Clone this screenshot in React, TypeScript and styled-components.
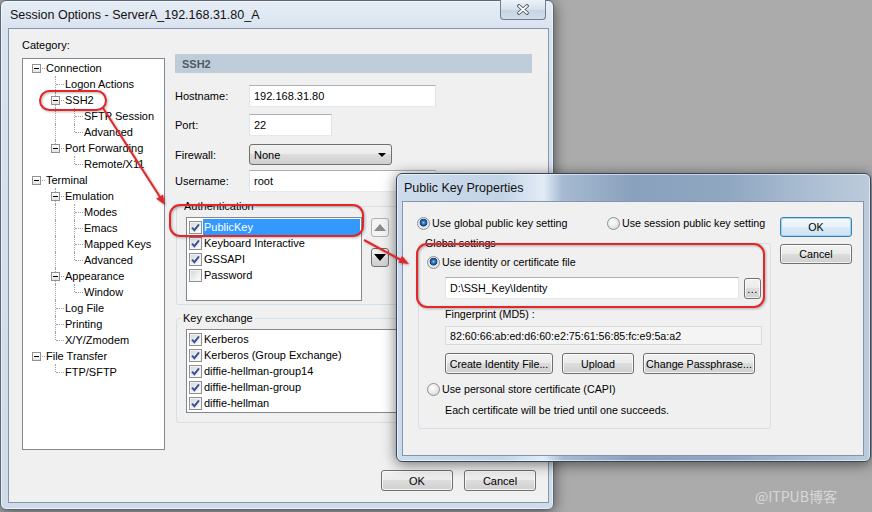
import React from 'react';
import styled, { createGlobalStyle } from 'styled-components';

const GlobalStyle = createGlobalStyle`
  html, body {
    margin: 0;
    padding: 0;
  }
  body {
    background: #ababab;
    font-family: "Liberation Sans", Arial, sans-serif;
    font-size: 11px;
    color: #000;
  }
`;

type TreeNode = { label: string; children?: TreeNode[] };

type FlatRow = {
  label: string
  depth: number
  expandable: boolean
  last: boolean
  guides: boolean[]
};

const categories: TreeNode[] = [
  {
    label: 'Connection',
    children: [
      { label: 'Logon Actions' },
      { label: 'SSH2', children: [{ label: 'SFTP Session' }, { label: 'Advanced' }] },
      { label: 'Port Forwarding', children: [{ label: 'Remote/X11' }] },
    ],
  },
  {
    label: 'Terminal',
    children: [
      {
        label: 'Emulation',
        children: [{ label: 'Modes' }, { label: 'Emacs' }, { label: 'Mapped Keys' }, { label: 'Advanced' }],
      },
      { label: 'Appearance', children: [{ label: 'Window' }] },
      { label: 'Log File' },
      { label: 'Printing' },
      { label: 'X/Y/Zmodem' },
    ],
  },
  { label: 'File Transfer', children: [{ label: 'FTP/SFTP' }] },
];

const flatten = (nodes: TreeNode[], depth = 0, guides: boolean[] = []): FlatRow[] =>
  nodes.flatMap((node, i) => {
    const last = i === nodes.length - 1;
    const row: FlatRow = { label: node.label, depth, expandable: !!node.children, last, guides };
    const kids = node.children ? flatten(node.children, depth + 1, [...guides, !last]) : [];
    return [row, ...kids];
  });

const authMethods = [
  { label: 'PublicKey', checked: true, selected: true },
  { label: 'Keyboard Interactive', checked: true },
  { label: 'GSSAPI', checked: true },
  { label: 'Password', checked: false },
];

const keyExchanges = [
  'Kerberos',
  'Kerberos (Group Exchange)',
  'diffie-hellman-group14',
  'diffie-hellman-group',
  'diffie-hellman',
];

const buttonFace = 'linear-gradient(#f2f2f2 0%, #ebebeb 49%, #dddddd 50%, #cfcfcf 100%)';

/* ---------- desktop & windows ---------- */

const Desktop = styled.div`
  position: relative;
  width: 872px;
  height: 512px;
  overflow: hidden;
  background: #ababab;
`;

const Window = styled.div<{ $left: number; $top: number; $width: number; $height: number; $active?: boolean; $pad: string }>`
  position: absolute;
  left: ${({ $left }) => $left}px;
  top: ${({ $top }) => $top}px;
  width: ${({ $width }) => $width}px;
  height: ${({ $height }) => $height}px;
  box-sizing: border-box;
  display: flex;
  flex-direction: column;
  padding: ${({ $pad }) => $pad};
  border: 1px solid ${({ $active }) => ($active ? '#34475e' : '#5a6777')};
  border-radius: 6px;
  background: ${({ $active }) =>
    $active
      ? 'linear-gradient(90deg, #cddcec 0%, #c3d4e7 22%, #e2ecf6 31%, #a6bad2 35%, #8aa1bd 50%, #90a7c2 70%, #afc1d5 90%, #bccbdb 100%)'
      : 'linear-gradient(180deg, #e6edf6 0px, #d9e3ef 28px, #cfdbe9 100%)'};
  box-shadow: 0 2px 14px rgba(0, 0, 0, 0.55), inset 0 0 0 1px rgba(255, 255, 255, 0.55);
`;

const TitleBar = styled.div<{ $indent: number }>`
  display: flex;
  align-items: center;
  height: 27px;
  margin-left: ${({ $indent }) => $indent}px;
  white-space: nowrap;
`;

const TitleText = styled.span`
  font-size: 12.5px;
  color: #111;
`;

const CloseButton = styled.div`
  margin-left: auto;
  align-self: flex-start;
  margin-top: -1px;
  margin-right: 3px;
  width: 46px;
  height: 20px;
  box-sizing: border-box;
  border: 1px solid #6d7e94;
  border-top: none;
  border-radius: 0 0 4px 4px;
  background: linear-gradient(#edf2f8, #d6e0ec 50%, #c6d3e2 51%, #d2dde9);
  display: flex;
  align-items: center;
  justify-content: center;
`;

const Client = styled.div`
  flex: 1;
  display: flex;
  flex-direction: column;
  box-sizing: border-box;
  border: 1px solid #8496ae;
  background: #f0f0f0;
`;

/* ---------- main window ---------- */

const MainClient = styled(Client)`
  padding: 9px 12px 0 13px;
`;

const MainBody = styled.div`
  display: flex;
  gap: 10px;
`;

const CategoryColumn = styled.div`
  display: flex;
  flex-direction: column;
  width: 143px;
`;

const CategoryLabel = styled.div`
  line-height: 14px;
  margin-bottom: 6px;
`;

const Tree = styled.div`
  height: 392px;
  box-sizing: border-box;
  border: 1px solid #828790;
  background: #fff;
  padding: 1px 0 0 4px;
`;

const TreeRow = styled.div`
  display: flex;
  height: 16px;
  white-space: nowrap;
`;

const Guide = styled.span<{ $line: boolean }>`
  position: relative;
  width: 19px;
  flex-shrink: 0;

  &::before {
    content: '';
    display: ${({ $line }) => ($line ? 'block' : 'none')};
    position: absolute;
    left: 9px;
    top: 0;
    height: 16px;
    border-left: 1px dotted #a0a0a0;
  }
`;

const Joint = styled.span<{ $line: 'none' | 'half' | 'full' }>`
  position: relative;
  width: 19px;
  flex-shrink: 0;

  &::before {
    content: '';
    display: ${({ $line }) => ($line === 'none' ? 'none' : 'block')};
    position: absolute;
    left: 9px;
    top: 0;
    height: ${({ $line }) => ($line === 'full' ? 16 : 8)}px;
    border-left: 1px dotted #a0a0a0;
  }

  &::after {
    content: '';
    position: absolute;
    left: 10px;
    top: 8px;
    width: 8px;
    border-top: 1px dotted #a0a0a0;
  }
`;

const Expander = styled.span`
  position: absolute;
  left: 5px;
  top: 4px;
  z-index: 1;
  width: 9px;
  height: 9px;
  box-sizing: border-box;
  border: 1px solid #919191;
  background: linear-gradient(#ffffff, #e4e4e4);

  &::before {
    content: '';
    position: absolute;
    left: 1px;
    top: 3px;
    width: 5px;
    height: 1px;
    background: #000;
  }
`;

const TreeLabel = styled.span`
  line-height: 16px;
`;

const Panel = styled.div`
  display: flex;
  flex-direction: column;
  width: 357px;
  margin-top: 16px;
`;

const SectionHeader = styled.div`
  height: 19px;
  display: flex;
  align-items: center;
  padding-left: 7px;
  background: #bfcddb;
  color: #4e5a66;
  font-weight: bold;
`;

const FormRow = styled.div<{ $gap: number }>`
  display: flex;
  align-items: center;
  margin-top: ${({ $gap }) => $gap}px;
`;

const FieldLabel = styled.span`
  width: 74px;
  flex-shrink: 0;
`;

const TextField = styled.input<{ $width: number; $height?: number }>`
  width: ${({ $width }) => $width}px;
  height: ${({ $height }) => $height ?? 22}px;
  box-sizing: border-box;
  margin: 0;
  padding: 0 4px;
  border: 1px solid #e2e3ea;
  border-top-color: #abadb3;
  border-bottom-color: #e3e9ef;
  background: #fff;
  font: inherit;
  color: #000;
  outline: none;
`;

const Combo = styled.div<{ $width: number }>`
  width: ${({ $width }) => $width}px;
  height: 21px;
  box-sizing: border-box;
  display: flex;
  align-items: center;
  padding: 0 5px 0 4px;
  border: 1px solid #707070;
  border-radius: 3px;
  background: ${buttonFace};
`;

const ComboArrow = styled.span`
  margin-left: auto;
  width: 0;
  height: 0;
  border-left: 4px solid transparent;
  border-right: 4px solid transparent;
  border-top: 4px solid #000;
`;

const Group = styled.fieldset<{ $gap: number; $width?: number; $indent?: number }>`
  margin: ${({ $gap }) => $gap}px 0 0 ${({ $indent }) => $indent ?? 1}px;
  width: ${({ $width }) => ($width ? `${$width}px` : 'auto')};
  box-sizing: border-box;
  min-width: 0;
  padding: 0;
  border: 1px solid #d5dfe5;
  border-radius: 3px;
`;

const GroupLegend = styled.legend<{ $offset: number }>`
  margin-left: ${({ $offset }) => $offset}px;
  padding: 0 2px;
  line-height: 14px;
`;

const GroupBody = styled.div<{ $pad: string }>`
  padding: ${({ $pad }) => $pad};
  display: flex;
`;

const ListBox = styled.div<{ $width: number }>`
  width: ${({ $width }) => $width}px;
  height: 84px;
  box-sizing: border-box;
  flex-shrink: 0;
  padding: 1px 1px 1px 2px;
  border: 1px solid #828790;
  background: #fff;
`;

const ListItem = styled.div`
  display: flex;
  align-items: center;
  height: 16px;
  white-space: nowrap;
`;

const ItemText = styled.span<{ $selected?: boolean }>`
  margin-left: 1px;
  padding: 0 1px;
  line-height: 16px;
  flex: ${({ $selected }) => ($selected ? 1 : 'none')};
  background: ${({ $selected }) => ($selected ? '#3399ff' : 'transparent')};
  color: ${({ $selected }) => ($selected ? '#fff' : '#000')};
`;

const CheckFrame = styled.span`
  width: 13px;
  height: 13px;
  box-sizing: border-box;
  flex-shrink: 0;
  display: flex;
  align-items: center;
  justify-content: center;
  border: 1px solid #8e8f8f;
  background: linear-gradient(135deg, #cfd3d8 0%, #eceef0 55%, #ffffff 100%);
  box-shadow: inset 0 0 0 1px #f4f4f4;
`;

const OrderButtons = styled.div`
  display: flex;
  flex-direction: column;
  gap: 11px;
  margin: 1px 0 0 9px;
`;

const ArrowButton = styled.div<{ $up?: boolean; $disabled?: boolean }>`
  width: 18px;
  height: 19px;
  box-sizing: border-box;
  display: flex;
  align-items: center;
  justify-content: center;
  border: 1px solid ${({ $disabled }) => ($disabled ? '#adb2b5' : '#707070')};
  border-radius: 3px;
  background: ${({ $disabled }) => ($disabled ? '#f4f4f4' : buttonFace)};

  &::before {
    content: '';
    width: 0;
    height: 0;
    border-left: 6px solid transparent;
    border-right: 6px solid transparent;
    ${({ $up, $disabled }) =>
      $up
        ? `border-bottom: 7px solid ${$disabled ? '#8a8a8a' : '#000'};`
        : `border-top: 7px solid ${$disabled ? '#8a8a8a' : '#000'};`}
  }
`;

const Footer = styled.div`
  display: flex;
  justify-content: flex-end;
  gap: 11px;
  margin-top: 20px;
`;

const PushButton = styled.button<{ $width: number; $height?: number; $default?: boolean }>`
  width: ${({ $width }) => $width}px;
  height: ${({ $height }) => $height ?? 21}px;
  box-sizing: border-box;
  flex-shrink: 0;
  margin: 0;
  padding: 0;
  font: inherit;
  color: #000;
  white-space: nowrap;
  border: 1px solid ${({ $default }) => ($default ? '#3c7fb1' : '#707070')};
  border-radius: 3px;
  background: ${({ $default }) =>
    $default ? 'linear-gradient(#f4f9fd 0%, #e9f3fa 49%, #d9eaf6 50%, #cfe3f2 100%)' : buttonFace};
  box-shadow: inset 0 0 0 1px ${({ $default }) => ($default ? '#9fd5f4' : 'rgba(255, 255, 255, 0.75)')};
`;

/* ---------- dialog ---------- */

const DialogClient = styled(Client)`
  flex-direction: row;
  gap: 9px;
  padding: 14px 12px 0 14px;
  font-size: 10.7px;
`;

const DialogMain = styled.div`
  display: flex;
  flex-direction: column;
  width: 354px;
`;

const RadioLine = styled.div`
  display: grid;
  grid-template-columns: 190px auto;
  height: 14px;
`;

const RadioLabel = styled.label`
  display: flex;
  align-items: center;
  gap: 2px;
  height: 14px;
  white-space: nowrap;
`;

const RadioDot = styled.span<{ $checked?: boolean }>`
  width: 13px;
  height: 13px;
  box-sizing: border-box;
  flex-shrink: 0;
  border-radius: 50%;
  border: 1px solid #8e8f8f;
  background: ${({ $checked }) =>
    $checked
      ? 'radial-gradient(circle at 50% 42%, #9ad0f5 0, #2f7fcc 1.5px, #0d3d74 3.6px, #e9e9e9 4.2px, #dadada 100%)'
      : 'radial-gradient(circle at 40% 35%, #ffffff 0, #e8e8e8 55%, #cdcdcd 100%)'};
`;

const GroupColumn = styled.div`
  display: flex;
  flex-direction: column;
`;

const Indented = styled.div<{ $gap: number }>`
  display: flex;
  gap: 9px;
  margin: ${({ $gap }) => $gap}px 0 0 18px;
  white-space: nowrap;
`;

const HintText = styled.div<{ $gap: number }>`
  margin: ${({ $gap }) => $gap}px 0 0 18px;
  line-height: 14px;
  white-space: nowrap;
`;

const BrowseButton = styled(PushButton)`
  margin-left: -4px;
  margin-top: 1px;
  letter-spacing: 0.5px;
`;

const FingerprintField = styled.div`
  width: 317px;
  height: 19px;
  box-sizing: border-box;
  display: flex;
  align-items: center;
  padding-left: 4px;
  border: 1px solid #d9d9d9;
  background: #f4f4f4;
  white-space: nowrap;
`;

const DialogButtons = styled.div`
  display: flex;
  flex-direction: column;
  gap: 7px;
  margin-top: 1px;
`;

/* ---------- overlays ---------- */

const Annotations = styled.svg`
  position: absolute;
  left: 0;
  top: 0;
  width: 872px;
  height: 512px;
  pointer-events: none;
  filter: drop-shadow(1px 1px 1px rgba(0, 0, 0, 0.3));
`;

const Watermark = styled.div`
  position: absolute;
  left: 755px;
  top: 486px;
  font-family: "Noto Sans CJK SC", "Liberation Sans", sans-serif;
  font-size: 14px;
  color: rgba(255, 255, 255, 0.55);
  white-space: nowrap;
`;

const CheckBox = ({ checked }: { checked: boolean }) => (
  <CheckFrame>
    {checked && (
      <svg width="9" height="9" viewBox="0 0 9 9">
        <path d="M1 4.6 L3.4 7.2 L8 1.4" stroke="#3b4f90" strokeWidth="1.9" fill="none" />
      </svg>
    )}
  </CheckFrame>
);

const RadioOption = ({ label, checked }: { label: string; checked?: boolean }) => (
  <RadioLabel>
    <RadioDot $checked={checked} />
    {label}
  </RadioLabel>
);

const CategoryTree = () => (
  <Tree>
    {flatten(categories).map((row, i) => (
      <TreeRow key={i}>
        {row.guides.map((g, d) => (
          <Guide key={d} $line={d > 0 && g} />
        ))}
        <Joint $line={row.depth === 0 ? 'none' : row.last ? 'half' : 'full'}>
          {row.expandable && <Expander />}
        </Joint>
        <TreeLabel>{row.label}</TreeLabel>
      </TreeRow>
    ))}
  </Tree>
);

export default function App() {
  return (
    <>
      <GlobalStyle />
      <Desktop>
        <Window $left={0} $top={0} $width={554} $height={510} $pad="0 4px 6px 7px">
          <TitleBar $indent={2}>
            <TitleText>Session Options - ServerA_192.168.31.80_A</TitleText>
            <CloseButton>
              <svg width="14" height="11" viewBox="0 0 14 11">
                <path d="M3 2 L11 9 M11 2 L3 9" stroke="#44505e" strokeWidth="3.6" strokeLinecap="round" />
                <path d="M3 2 L11 9 M11 2 L3 9" stroke="#ffffff" strokeWidth="1.8" strokeLinecap="round" />
              </svg>
            </CloseButton>
          </TitleBar>
          <MainClient>
            <MainBody>
              <CategoryColumn>
                <CategoryLabel>Category:</CategoryLabel>
                <CategoryTree />
              </CategoryColumn>
              <Panel>
                <SectionHeader>SSH2</SectionHeader>
                <FormRow $gap={12}>
                  <FieldLabel>Hostname:</FieldLabel>
                  <TextField $width={187} readOnly value="192.168.31.80" />
                </FormRow>
                <FormRow $gap={7}>
                  <FieldLabel>Port:</FieldLabel>
                  <TextField $width={83} readOnly value="22" />
                </FormRow>
                <FormRow $gap={8}>
                  <FieldLabel>Firewall:</FieldLabel>
                  <Combo $width={143}>
                    None
                    <ComboArrow />
                  </Combo>
                </FormRow>
                <FormRow $gap={5}>
                  <FieldLabel>Username:</FieldLabel>
                  <TextField $width={187} readOnly value="root" />
                </FormRow>
                <Group $gap={7}>
                  <GroupLegend $offset={5}>Authentication</GroupLegend>
                  <GroupBody $pad="4px 0 3px 9px">
                    <ListBox $width={176}>
                      {authMethods.map((m) => (
                        <ListItem key={m.label}>
                          <CheckBox checked={m.checked} />
                          <ItemText $selected={m.selected}>{m.label}</ItemText>
                        </ListItem>
                      ))}
                    </ListBox>
                    <OrderButtons>
                      <ArrowButton $up $disabled />
                      <ArrowButton />
                    </OrderButtons>
                  </GroupBody>
                </Group>
                <Group $gap={6}>
                  <GroupLegend $offset={4}>Key exchange</GroupLegend>
                  <GroupBody $pad="4px 0 9px 9px">
                    <ListBox $width={300}>
                      {keyExchanges.map((k) => (
                        <ListItem key={k}>
                          <CheckBox checked />
                          <ItemText>{k}</ItemText>
                        </ListItem>
                      ))}
                    </ListBox>
                  </GroupBody>
                </Group>
              </Panel>
            </MainBody>
            <Footer>
              <PushButton $width={72}>OK</PushButton>
              <PushButton $width={72}>Cancel</PushButton>
            </Footer>
          </MainClient>
        </Window>

        <Window $left={396} $top={173} $width={475} $height={289} $pad="0 6px 5px 5px" $active>
          <TitleBar $indent={2}>
            <TitleText>Public Key Properties</TitleText>
          </TitleBar>
          <DialogClient>
            <DialogMain>
              <RadioLine>
                <RadioOption checked label="Use global public key setting" />
                <RadioOption label="Use session public key setting" />
              </RadioLine>
              <Group $gap={6} $width={353}>
                <GroupLegend $offset={4}>Global settings</GroupLegend>
                <GroupBody $pad="5px 0 11px 8px">
                  <GroupColumn>
                    <RadioOption checked label="Use identity or certificate file" />
                    <Indented $gap={8}>
                      <TextField $width={294} readOnly value="D:\SSH_Key\Identity" />
                      <BrowseButton $width={17} $height={21}>...</BrowseButton>
                    </Indented>
                    <HintText $gap={8}>Fingerprint (MD5) :</HintText>
                    <Indented $gap={5}>
                      <FingerprintField>82:60:66:ab:ed:d6:60:e2:75:61:56:85:fc:e9:5a:a2</FingerprintField>
                    </Indented>
                    <Indented $gap={8}>
                      <PushButton $width={108}>Create Identity File...</PushButton>
                      <PushButton $width={72}>Upload</PushButton>
                      <PushButton $width={112}>Change Passphrase...</PushButton>
                    </Indented>
                    <FormRow $gap={8}>
                      <RadioOption label="Use personal store certificate (CAPI)" />
                    </FormRow>
                    <HintText $gap={7}>Each certificate will be tried until one succeeds.</HintText>
                  </GroupColumn>
                </GroupBody>
              </Group>
            </DialogMain>
            <DialogButtons>
              <PushButton $width={72} $height={20} $default>OK</PushButton>
              <PushButton $width={72} $height={20}>Cancel</PushButton>
            </DialogButtons>
          </DialogClient>
        </Window>

        <Annotations viewBox="0 0 872 512">
          <g fill="none" stroke="#e3262a" strokeWidth="2">
            <rect x="40" y="91" width="66" height="19" rx="9.5" />
            <rect x="170" y="205" width="193" height="31" rx="10" />
            <rect x="417" y="244" width="347" height="63" rx="10" />
            <line x1="103" y1="108" x2="160" y2="197" />
            <line x1="364" y1="240" x2="401" y2="260" />
          </g>
          <g fill="#e3262a">
            <polygon points="165,205 156.2,198.8 163,194.4" />
            <polygon points="409,264 398.3,262.8 402.1,255.8" />
          </g>
        </Annotations>
        <Watermark>@ITPUB博客</Watermark>
      </Desktop>
    </>
  );
}
